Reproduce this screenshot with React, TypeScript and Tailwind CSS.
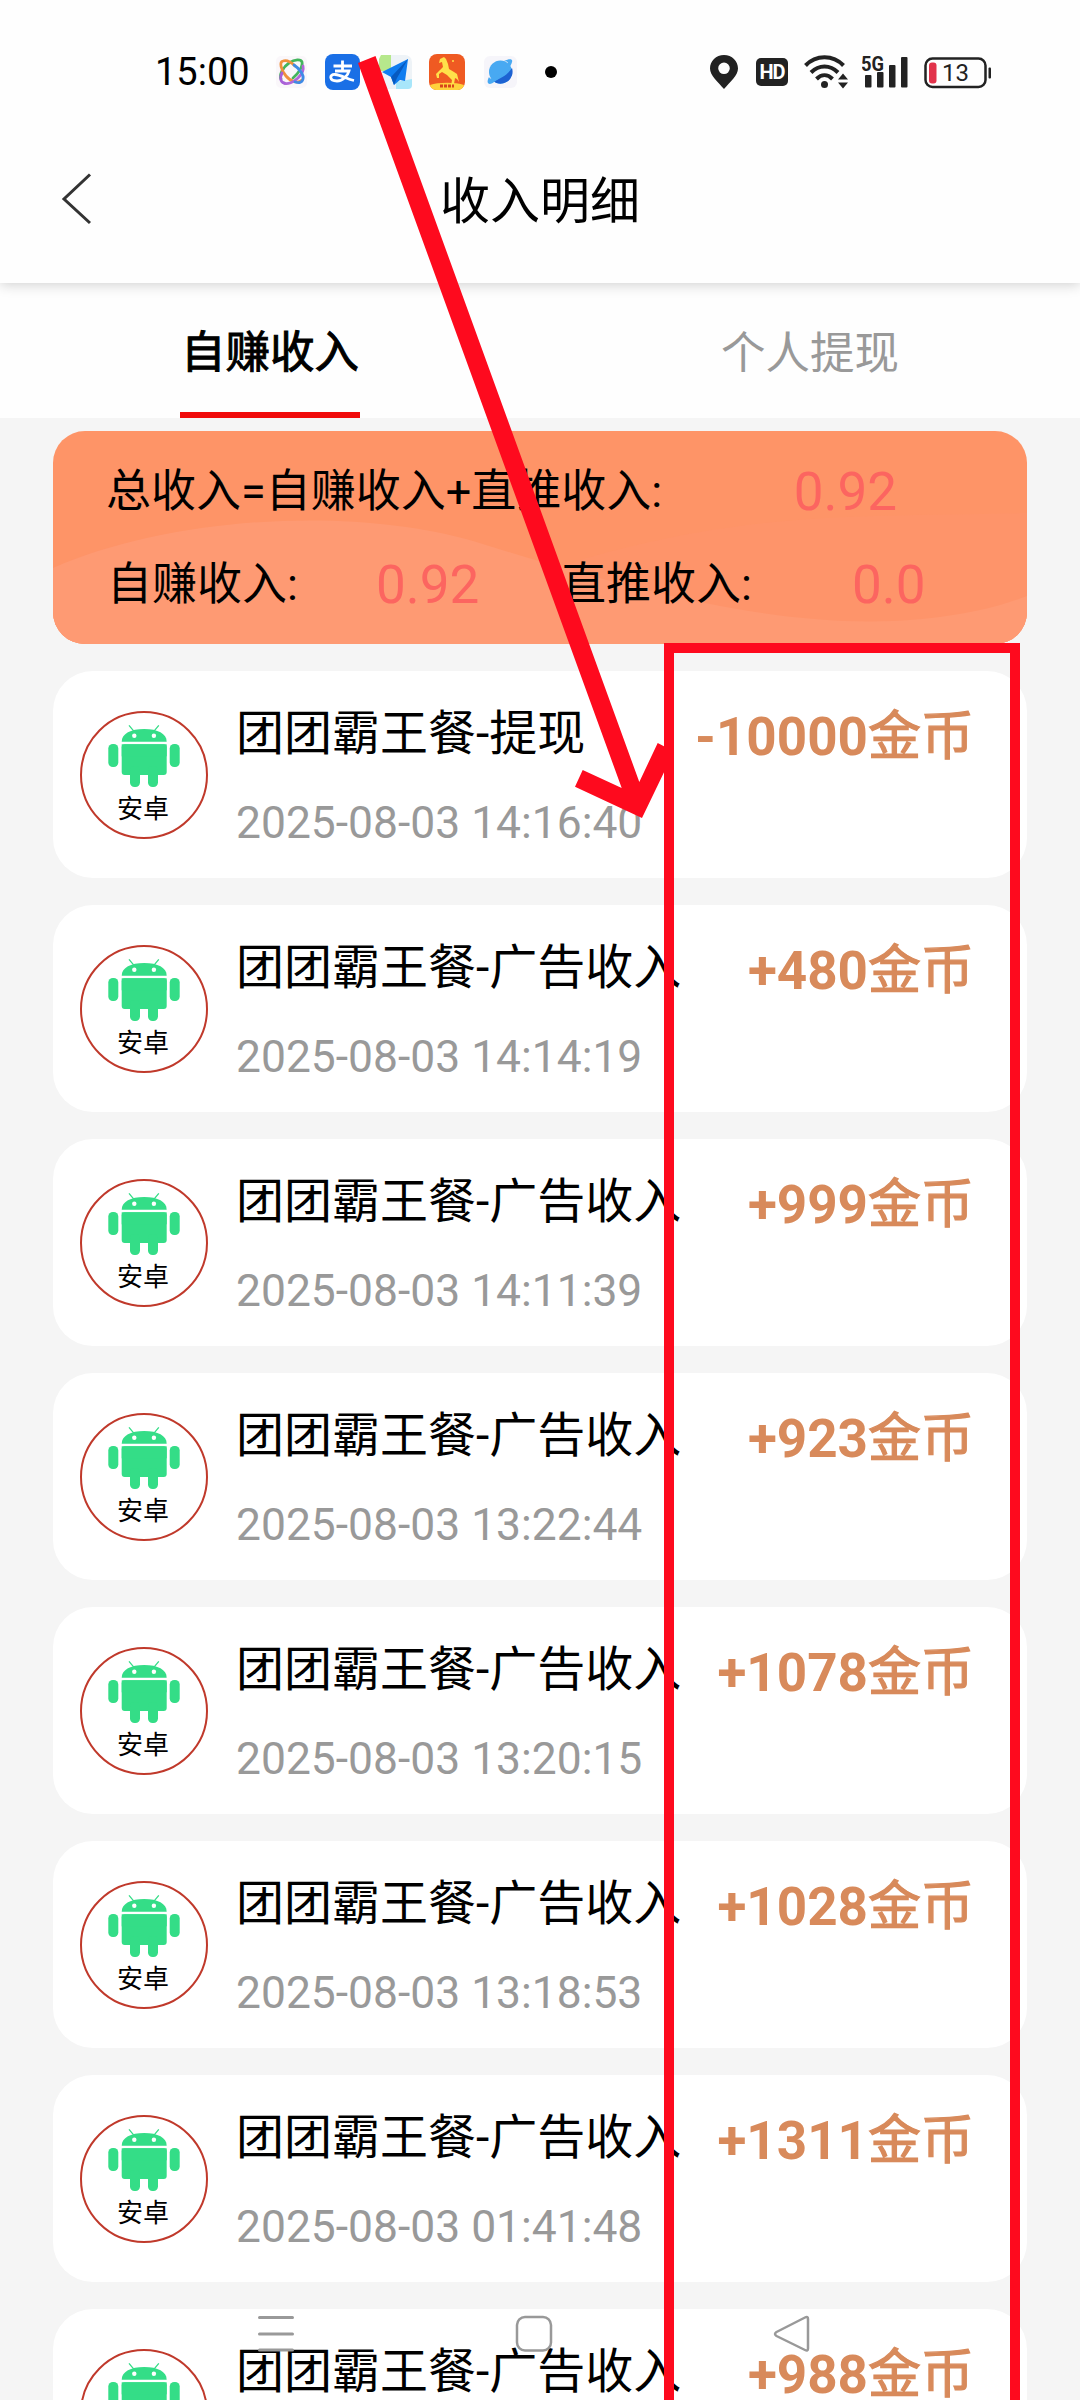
import React from 'react';

interface IncomeRecord {
  id: number;
  title: string;
  time: string;
  amount: string;
}

const records: IncomeRecord[] = [
  { id: 1, title: '团团霸王餐-提现', time: '2025-08-03 14:16:40', amount: '-10000' },
  { id: 2, title: '团团霸王餐-广告收入', time: '2025-08-03 14:14:19', amount: '+480' },
  { id: 3, title: '团团霸王餐-广告收入', time: '2025-08-03 14:11:39', amount: '+999' },
  { id: 4, title: '团团霸王餐-广告收入', time: '2025-08-03 13:22:44', amount: '+923' },
  { id: 5, title: '团团霸王餐-广告收入', time: '2025-08-03 13:20:15', amount: '+1078' },
  { id: 6, title: '团团霸王餐-广告收入', time: '2025-08-03 13:18:53', amount: '+1028' },
  { id: 7, title: '团团霸王餐-广告收入', time: '2025-08-03 01:41:48', amount: '+1311' },
  { id: 8, title: '团团霸王餐-广告收入', time: '', amount: '+988' },
];

const AppIcons: React.FC = () => (
  <div className="flex items-center">
    {/* Knot */}
    <svg className="ml-[26px]" width="32" height="36" viewBox="0 0 32 36" fill="none">
      <rect x="0" y="2" width="31" height="32" rx="5" fill="#faf7fa" />
      <g strokeWidth="2.800" strokeLinecap="round">
        <path d="M5 25C3 21 7 13 13 9s12-4 13-1c1 4-3 11-9 16" stroke="#43b55c" />
        <path d="M26 26c-4 4-11 2-16-4S3 8 7 7c3-1 8 1 12 5" stroke="#f0913c" />
        <path d="M27 12c1 4-1 8-5 12s-11 7-14 5" stroke="#b068d8" />
        <path d="M18 11c6 4 10 10 9 14s-4 4-8 3" stroke="#3f8be6" />
        <path d="M8 29c-4-1-4-6-2-10" stroke="#a860d8" />
      </g>
    </svg>
    {/* Alipay */}
    <svg className="ml-[17px]" width="36" height="36" viewBox="0 0 36 36" fill="none">
      <rect width="35" height="36" rx="8" fill="#1a6fe6" />
      <path d="M8.500 12h18.500M17.500 6.500v10M10 17h14c-1 4-6 10-12 10-8 0-8-7-2-6.500 6 .5 12 4.500 19 6" stroke="#fff" strokeWidth="2.800" />
    </svg>
    {/* Paper plane */}
    <svg className="ml-[17px]" width="35" height="36" viewBox="0 0 35 36">
      <rect x="1" y="1" width="33" height="34" rx="7" fill="#eef3f7" />
      <path d="M3 1h10v16H1V5z" fill="#b6e88c" />
      <path d="M18 28l16-3v6a4 4 0 0 1-4 4H18z" fill="#a8e6fa" />
      <path d="M30 5L4 18l9 5 3 8 6-5 5 1z" fill="#0f7df0" />
      <path d="M30 5L13 23l3 8 3-7z" fill="#075ac0" />
    </svg>
    {/* Horse */}
    <svg className="ml-[16px]" width="36" height="36" viewBox="0 0 36 36">
      <rect width="36" height="36" rx="8" fill="#ef5a22" />
      <path d="M1 31c8-3 26-3 34 0-1 4-4 5-8 5H9c-4 0-7-1-8-5z" fill="#ffd23c" />
      <path d="M11 5l4-2 2 2 2 5 1 5 5 3 3 2 2 8-2-3-2-1-1 6-3 2 1-6-5-5-5-3-3 2v4H8l-1-4 4-4 3-3-1-5-3 1z" fill="#ffe14a" />
      <circle cx="24" cy="7" r="1" fill="#ffe14a" />
      <path d="M11 32h14" stroke="#d8451c" strokeWidth="3" strokeDasharray="3 1" />
    </svg>
    {/* Planet */}
    <svg className="ml-[19px]" width="33" height="36" viewBox="0 0 33 36">
      <rect y="2" width="33" height="32" rx="6" fill="#f6f5fa" />
      <circle cx="16.500" cy="18" r="11.500" fill="#48a9f2" />
      <path d="M28 14a12 12 0 0 1-19 13c8-2 15-7 19-13z" fill="#1d62d2" />
      <path d="M20 7c6-3 9-2 8 1-1 6-15 20-22 22-3 0-3-3-1-7 1 2 3 2 6 0 6-4 11-9 13-13 0-2-1-3-4-3z" fill="#48a9f2" />
    </svg>
    <span className="ml-[28px] h-3 w-3 rounded-full bg-black" />
  </div>
);

const SystemIcons: React.FC = () => (
  <div className="flex items-center text-[#222]">
    <svg width="28" height="36" viewBox="0 0 28 36" fill="currentColor">
      <path fillRule="evenodd" d="M14 1C6 1 0 7 0 14.500c0 7 8 13.500 14 20.500 6-7 14-13.500 14-20.500C28 7 22 1 14 1zm0 7.500a5.800 5.800 0 1 1 0 11.600 5.800 5.800 0 0 1 0-11.600z" />
    </svg>
    <span className="ml-[18px] flex h-7 w-8 items-center justify-center rounded-[5px] bg-[#222] font-[Roboto] text-[20px] font-bold tracking-[-1px] text-white">
      HD
    </span>
    {/* Wi-Fi with traffic arrows */}
    <svg className="ml-[16px]" width="44" height="36" viewBox="0 0 44 36" fill="none" stroke="currentColor">
      <path d="M1.500 11.500C12 .500 29 .500 39.500 11.500" strokeWidth="4" />
      <path d="M7 18.500c8-8 19-8 27 0" strokeWidth="4" />
      <path d="M12.500 25c5-5 11-5 16 0" strokeWidth="4" />
      <circle cx="20.500" cy="30.500" r="3.500" fill="currentColor" stroke="none" />
      <path d="M34 25.500l5-6 5 6zM34 28.500l5 6 5-6z" fill="currentColor" stroke="none" />
    </svg>
    {/* Signal */}
    <svg className="ml-[14px]" width="46" height="36" viewBox="0 0 46 36" fill="currentColor">
      <text x="-1" y="17" fontFamily="Roboto" fontWeight="700" fontSize="21" textLength="23" lengthAdjust="spacingAndGlyphs">5G</text>
      <rect x="3" y="21" width="6.500" height="12.500" rx="1" />
      <rect x="15" y="18" width="6.500" height="15.500" rx="1" />
      <rect x="27" y="11" width="6.500" height="22.500" rx="1" />
      <rect x="39" y="3" width="6.500" height="30.500" rx="1" />
    </svg>
    {/* Battery */}
    <svg className="ml-[16px]" width="68" height="36" viewBox="0 0 68 36" fill="none">
      <rect x="1.500" y="4.500" width="60" height="28.500" rx="7" stroke="currentColor" strokeWidth="2.500" />
      <rect x="5" y="8.500" width="7.500" height="21" rx="3" fill="#e2334b" />
      <rect x="64.500" y="13.500" width="2.500" height="11" rx="1" fill="currentColor" />
      <text x="18" y="26.500" fontFamily="Roboto" fontSize="24" fill="currentColor">13</text>
    </svg>
  </div>
);

const AndroidAvatar: React.FC = () => (
  <div className="relative flex h-32 w-32 shrink-0 flex-col items-center justify-end rounded-full border-2 border-[#c0392b] pb-[13px]">
    <svg className="absolute -left-0.5 -top-0.5" width="128" height="80" viewBox="0 0 128 80" fill="#34dd87">
      <path d="M41.700 30.700c0-8 9-12.700 22.500-12.700s22.500 4.700 22.500 12.700z" />
      <path d="M49 14.300l5 6M78.800 14.300l-5 6" stroke="#34dd87" strokeWidth="1.300" />
      <rect x="41.700" y="33.300" width="45" height="30.700" rx="3" />
      <rect x="41.700" y="33.300" width="45" height="12" />
      <rect x="28.300" y="33" width="10" height="23" rx="4.500" />
      <rect x="89.700" y="33" width="10" height="23" rx="4.500" />
      <rect x="50" y="55" width="10" height="21" rx="4.500" />
      <rect x="68" y="55" width="10" height="21" rx="4.500" />
      <circle cx="54.300" cy="24.700" r="2.200" fill="#fff" />
      <circle cx="73.900" cy="24.700" r="2.200" fill="#fff" />
    </svg>
    <span className="mr-[2px] text-[26px] leading-[30px] text-black">安卓</span>
  </div>
);

const RecordCard: React.FC<{ record: IncomeRecord }> = ({ record }) => (
  <div className="flex h-[207px] shrink-0 items-start rounded-[40px] bg-white pl-[27px] pr-[53px]">
    <div className="mt-10">
      <AndroidAvatar />
    </div>
    <div className="ml-[28px] mt-[33px] whitespace-nowrap">
      <div className="text-[48px] leading-[60px] text-black">{record.title}</div>
      <div className="mt-[31px] text-[44.400px] leading-[56px] text-[#999]">{record.time}</div>
    </div>
    <div className="ml-auto mt-[33px] whitespace-nowrap text-[53px] font-bold leading-[66px] text-[#d88a5b]">
      {record.amount}
      <span className="font-normal [-webkit-text-stroke:1.2px_#d88a5b]">金币</span>
    </div>
  </div>
);

const Annotation: React.FC = () => (
  <div className="absolute inset-0 z-20">
    <svg width="1080" height="830" viewBox="0 0 1080 830" fill="#fe0a1e">
      <path d="M358 63L375.500 56 639.300 782 657.700 743 674 751.500 642 818 575 786.700 582.700 770 621.700 788z" />
    </svg>
    <div className="absolute left-[664px] top-[643px] h-[1800px] w-[356px] border-[10px] border-[#fe0a1e]" />
  </div>
);

const NavigationBar: React.FC = () => (
  <div className="absolute bottom-[46px] left-0 flex w-full justify-between pl-[257px] pr-[269px]">
    <svg width="38" height="40" viewBox="0 0 38 40" stroke="#999" strokeWidth="3" strokeLinecap="round">
      <path d="M2.500 3.500h33M2.500 20h33M2.500 36h33" />
    </svg>
    <svg width="38" height="40" viewBox="0 0 38 40" fill="none" stroke="#999" strokeWidth="2.500">
      <rect x="2" y="3" width="34" height="33.500" rx="8" />
    </svg>
    <svg width="38" height="40" viewBox="0 0 38 40" fill="none" stroke="#999" strokeWidth="2.500" strokeLinejoin="round">
      <path d="M3.500 18L32 3.500q3-1.500 3 1.500v29.500q0 3-3 1.500L3.500 22q-3-2 0-4z" />
    </svg>
  </div>
);

export default function App() {
  return (
    <div className="relative flex h-[2400px] w-[1080px] flex-col overflow-hidden bg-[#f5f5f5] font-[Roboto,'Noto_Sans_CJK_SC',sans-serif]">
      {/* Header */}
      <header className="relative z-10 h-[283px] shrink-0 bg-[#fefefe] shadow-[0_2px_12px_rgba(0,0,0,0.18)]">
        <div className="flex h-[144px] items-center justify-between pl-[155px] pr-[88px]">
          <div className="flex items-center">
            <span className="text-[38px] leading-none text-black">15:00</span>
            <AppIcons />
          </div>
          <SystemIcons />
        </div>
        <div className="flex h-[112px] items-center justify-center">
          <svg className="ml-[60px]" width="32" height="54" viewBox="0 0 32 54" fill="none" stroke="#333" strokeWidth="3">
            <path d="M30 1.500L4 26l26 24" />
          </svg>
          <h1 className="mr-[92px] flex-1 pt-[5px] text-center text-[50px] text-black">收入明细</h1>
        </div>
      </header>

      {/* Tabs */}
      <div className="flex h-[135px] shrink-0 bg-[#fefefe]">
        <div className="flex flex-1 justify-center">
          <div className="flex w-[180px] items-center justify-center whitespace-nowrap border-b-[6px] border-[#f00a0a] pt-[12px] text-[44.500px] text-black [-webkit-text-stroke:1px_#000]">
            自赚收入
          </div>
        </div>
        <div className="flex flex-1 items-center justify-center pt-[7px] text-[44.500px] text-[#999]">个人提现</div>
      </div>

      {/* Totals */}
      <section className="relative mx-[53px] mt-[13px] h-[213px] shrink-0 overflow-hidden rounded-[32px] bg-[#fe9467] text-[45px] leading-[60px] text-black">
        <svg className="absolute inset-0" width="974" height="213" viewBox="0 0 974 213">
          <path d="M0 137C100 90 310 70 420 116c60 24 70 28 110 12C700 80 800 86 974 82v131H0z" fill="#fe946a" />
          <path d="M0 137C120 85 300 75 420 110c160 50 300 85 420 80 60-3 100-12 134-25v48H0z" fill="#fe9a73" />
        </svg>
        <div className="relative flex items-center pl-[53px] pt-[31px]">
          <span>总收入=自赚收入+直推收入:</span>
          <span className="ml-auto mr-[130px] text-[53px] text-[#fc6560]">0.92</span>
        </div>
        <div className="relative mt-[33px] flex items-center pl-[54px]">
          <span className="w-[269px]">自赚收入:</span>
          <span className="w-[185px] text-[53px] text-[#fc6560]">0.92</span>
          <span className="w-[291px]">直推收入:</span>
          <span className="text-[53px] text-[#fc6560]">0.0</span>
        </div>
      </section>

      {/* Records */}
      <main className="mx-[53px] mt-[27px] flex flex-col gap-[27px]">
        {records.map(record => (
          <RecordCard key={record.id} record={record} />
        ))}
      </main>

      <NavigationBar />
      <Annotation />
    </div>
  );
}
